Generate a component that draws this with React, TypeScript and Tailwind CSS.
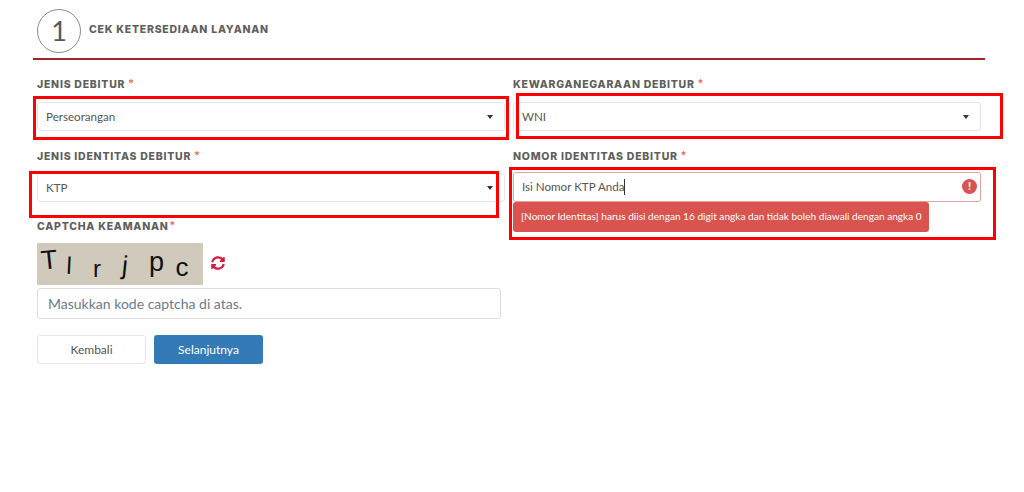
import React from "react";
import { FaSyncAlt } from "react-icons/fa";

const labelCls = "font-['Inter','Liberation_Sans',sans-serif] text-[10.5px] leading-[14px] font-extrabold tracking-[0.75px] text-[#5f5f5f] uppercase whitespace-nowrap";
const bodyCls = "font-['Lato','Noto_Sans',sans-serif] text-[11.6px] text-[#555555]";

function Label({ text, gap = true }: { text: string; gap?: boolean }) {
  return (
    <div className={`${labelCls} flex h-[14px]`}>
      <span>{text}</span>
      <span className={`text-[#e2564f] font-normal text-[11px] -mt-[2px] ${gap ? "ml-[3px]" : "ml-[1px]"}`}>*</span>
    </div>
  );
}

function Select({ value }: { value: string }) {
  return (
    <div className={`${bodyCls} h-[29px] w-[468px] flex items-center justify-between pl-[8px] pr-[11px] bg-white border border-[#e6e6e6] rounded-[3px]`}>
      <span>{value}</span>
      <span className="w-0 h-0 border-x-[3.5px] border-x-transparent border-t-[4px] border-t-[#333333]" />
    </div>
  );
}

function RedBox({ className }: { className: string }) {
  return <div className={`absolute border-[3px] border-[#ff0000] pointer-events-none ${className}`} />;
}

const captcha: { c: string; cls: string }[] = [
  { c: "T", cls: "text-[27px] -mt-[8px] -rotate-6" },
  { c: "l", cls: "ml-[7px] text-[24px] mt-[3px] rotate-3" },
  { c: "r", cls: "ml-[14px] text-[24px] mt-[9px]" },
  { c: "j", cls: "ml-[14px] text-[26px] mt-[2px] rotate-6" },
  { c: "p", cls: "ml-[17px] text-[27px] -mt-[3px]" },
  { c: "c", cls: "ml-[12px] text-[26px] mt-[5px]" },
];

export default function App() {
  return (
    <div className="relative w-[1024px] h-[492px] bg-white overflow-hidden pl-[33px]">
      <div className="w-[952px] h-[60px] pl-[4px] pt-[9px] border-b-2 border-[#a52528] flex items-start">
        <div className="w-[44px] h-[44px] rounded-full border border-[#8b8b8b] flex items-center justify-center font-['Lato',sans-serif] text-[27px] text-[#555a60]">1</div>
        <div className="ml-[8px] mt-[14px] font-['Inter',sans-serif] text-[10.5px] leading-[14px] font-extrabold tracking-[0.75px] text-[#5f5f5f] whitespace-nowrap">CEK KETERSEDIAAN LAYANAN</div>
      </div>

      <div className="flex pl-[4px] pt-[18px] gap-[8px]">
        <div className="w-[468px] flex flex-col">
          <Label text="Jenis Debitur" />
          <div className="mt-[10px]"><Select value="Perseorangan" /></div>
          <div className="mt-[19px]"><Label text="Jenis Identitas Debitur" /></div>
          <div className="mt-[9px]"><Select value="KTP" /></div>
          <div className="mt-[18px]"><Label text="Captcha Keamanan" gap={false} /></div>
          <div className="mt-[9px] flex items-center">
            <div className="w-[166px] h-[42px] bg-[#cfcabc] flex items-center pl-[4px] font-['Liberation_Sans',sans-serif] text-[#111111] overflow-hidden">
              {captcha.map((l, i) => (
                <span key={i} className={`block w-[14px] leading-none text-center ${l.cls}`}>{l.c}</span>
              ))}
            </div>
            <FaSyncAlt className="ml-[8px] -mt-[3px] w-[14px] h-[14px] text-[#d9183b]" />
          </div>
          <div className="mt-[3px] w-[464px] h-[31px] flex items-center pl-[10px] border border-[#d9dce1] rounded-[3px] font-['Lato',sans-serif] text-[14px] text-[#6c7a89]">
            Masukkan kode captcha di atas.
          </div>
          <div className="mt-[16px] flex gap-[8px]">
            <div className="w-[109px] h-[29px] flex items-center justify-center border border-[#e6e6e6] rounded-[3px] bg-white font-['Lato',sans-serif] text-[12px] text-[#555555]">Kembali</div>
            <div className="w-[109px] h-[29px] flex items-center justify-center rounded-[3px] bg-[#337ab7] font-['Lato',sans-serif] text-[12px] text-white">Selanjutnya</div>
          </div>
        </div>

        <div className="w-[468px] flex flex-col">
          <Label text="Kewarganegaraan Debitur" />
          <div className="mt-[10px]"><Select value="WNI" /></div>
          <div className="mt-[19px]"><Label text="Nomor Identitas Debitur" /></div>
          <div className="mt-[8px] h-[30px] relative flex items-center pl-[8px] border border-[#e9a09c] rounded-[3px] bg-white">
            <span className={bodyCls}>Isi Nomor KTP Anda</span>
            <span className="w-px h-[16px] bg-[#333333]" />
            <span className="absolute right-[3px] top-[6px] w-[15px] h-[15px] rounded-full bg-[#d9534f] flex items-center justify-center text-white text-[11px] font-bold font-['Liberation_Sans',sans-serif]">!</span>
          </div>
          <div className="w-[416px] h-[30px] flex items-center pl-[8px] bg-[#d9534f] rounded-[3px] font-['Lato',sans-serif] text-[10.1px] text-white whitespace-nowrap">
            [Nomor Identitas] harus diisi dengan 16 digit angka dan tidak boleh diawali dengan angka 0
          </div>
        </div>
      </div>

      <RedBox className="left-[33px] top-[96px] w-[476px] h-[44px]" />
      <RedBox className="left-[516px] top-[93px] w-[487px] h-[46px]" />
      <RedBox className="left-[29px] top-[171px] w-[470px] h-[47px]" />
      <RedBox className="left-[509px] top-[167px] w-[487px] h-[73px]" />
    </div>
  );
}
